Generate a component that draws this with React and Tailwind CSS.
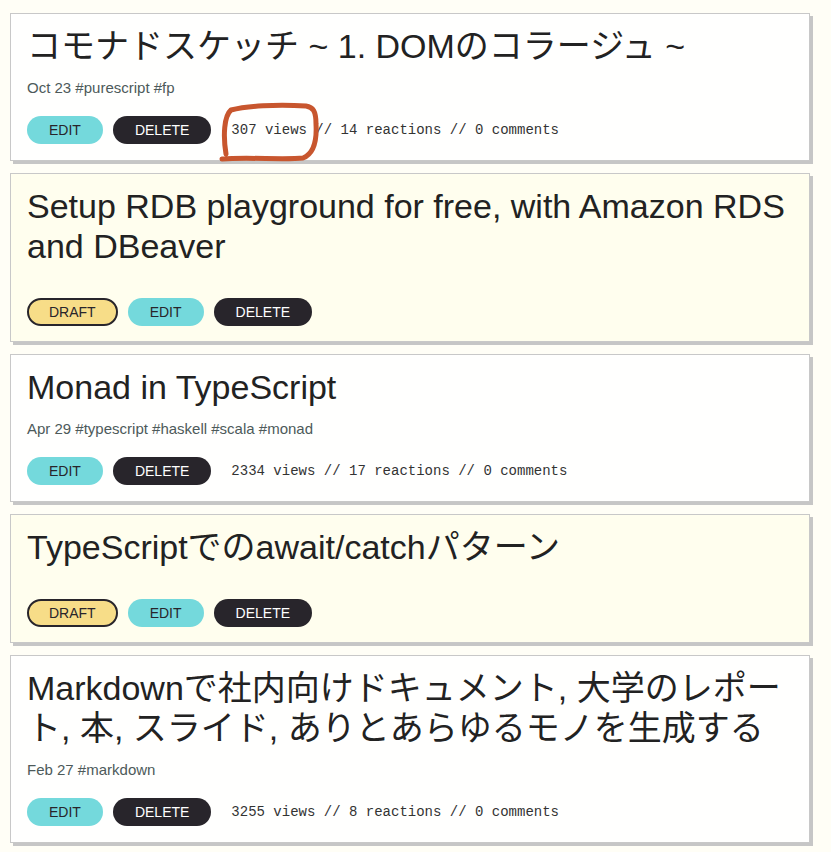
import React from 'react';

const posts = [
  {
    title: 'コモナドスケッチ ~ 1. DOMのコラージュ ~',
    meta: 'Oct 23 #purescript #fp',
    stats: '307 views // 14 reactions // 0 comments',
    circled: true,
  },
  {
    title: 'Setup RDB playground for free, with Amazon RDS and DBeaver',
    draft: true,
  },
  {
    title: 'Monad in TypeScript',
    meta: 'Apr 29 #typescript #haskell #scala #monad',
    stats: '2334 views // 17 reactions // 0 comments',
  },
  {
    title: 'TypeScriptでのawait/catchパターン',
    draft: true,
  },
  {
    title: 'Markdownで社内向けドキュメント, 大学のレポート, 本, スライド, ありとあらゆるモノを生成する',
    meta: 'Feb 27 #markdown',
    stats: '3255 views // 8 reactions // 0 comments',
  },
];

// hand-drawn marker loop around the view count
const Circle = () => (
  <svg
    className="absolute left-[205px] top-[82px] pointer-events-none"
    width="110"
    height="70"
    viewBox="0 0 110 70"
    fill="none"
  >
    <path
      d="M6 63 C30 61, 70 64, 87 62 C97 58, 101 45, 100 28 C100 15, 97 11, 90 10 C60 8, 30 10, 15 14 C8 20, 7 40, 10 58"
      stroke="#c8562e"
      strokeWidth="5"
      strokeLinecap="round"
      strokeLinejoin="round"
    />
  </svg>
);

const PostCard = ({ post }) => (
  <div
    className={`relative border border-[#c8c8c8] shadow-[3px_3px_0_#c6c6c6] px-4 pt-3 ${
      post.stats ? 'pb-4' : 'pb-[15px]'
    } ${post.draft ? 'bg-[#fffeee]' : 'bg-[#fffffe]'}`}
  >
    <h2 className="text-[34px] leading-10 text-[#222] mb-[11px]">{post.title}</h2>
    {post.meta ? (
      <p className="text-[15px] leading-[21px] text-[#4d5a5a] mb-[18px]">{post.meta}</p>
    ) : (
      <div className="h-[21px]" />
    )}
    <div className="flex items-center gap-[10px]">
      {post.draft && (
        <button className="h-7 px-[20px] rounded-full border-2 border-[#28252b] bg-[#f7dd88] text-[14px] text-[#28252b]">
          DRAFT
        </button>
      )}
      <button className="h-7 px-[22px] rounded-full bg-[#74d9dc] text-[14px] text-[#28252b]">EDIT</button>
      <button className="h-7 px-[22px] rounded-full bg-[#28252b] text-[14px] text-white">DELETE</button>
      {post.stats && (
        <span className="ml-[10px] text-[14px] text-[#333] font-['Liberation_Mono',monospace]">{post.stats}</span>
      )}
    </div>
    {post.circled && <Circle />}
  </div>
);

export default function App() {
  return (
    <div className="min-h-screen bg-[#fffef6] pl-[10px] pr-[21px] pt-[13px] pb-4 font-['Liberation_Sans','Noto_Sans_CJK_JP',sans-serif]">
      <div className="flex flex-col gap-[12px]">
        {posts.map((p, i) => (
          <PostCard key={i} post={p} />
        ))}
      </div>
    </div>
  );
}
